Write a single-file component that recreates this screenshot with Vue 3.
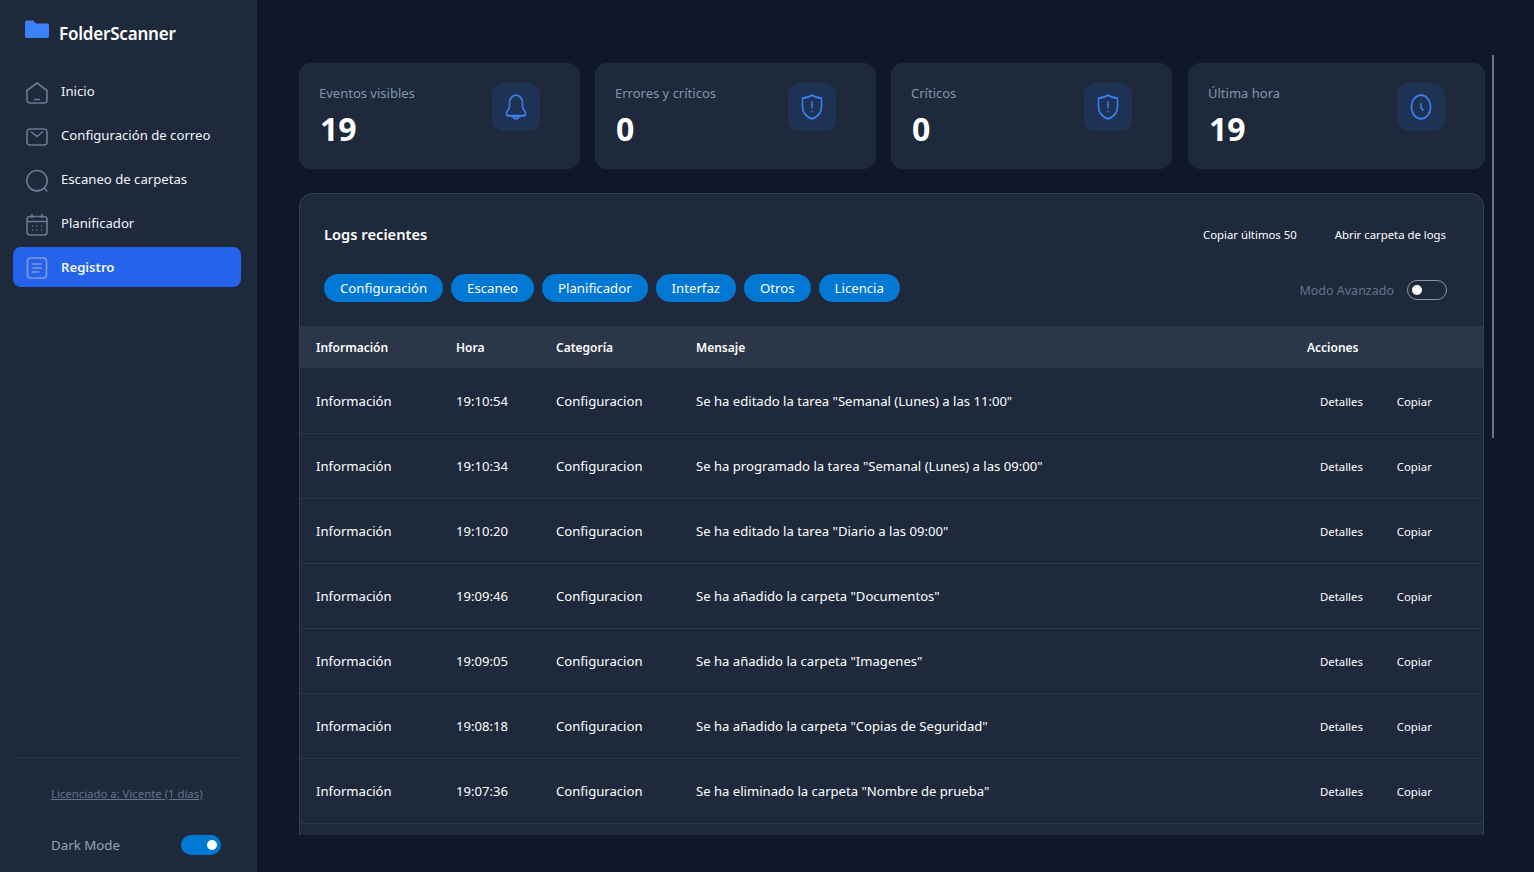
<template>
  <div class="app">
    <aside class="sidebar">
      <div class="brand">
        <svg class="brand-icon" viewBox="0 0 24 20" width="24" height="20">
          <path d="M0 2.500A2 2 0 0 1 2 .5h6.200l3 3H22a2 2 0 0 1 2 2V16a2 2 0 0 1-2 2H2a2 2 0 0 1-2-2z" fill="#3b82f6" />
        </svg>
        <span>FolderScanner</span>
      </div>

      <nav class="nav">
        <a v-for="item in navItems" :key="item.label" class="nav-item" :class="{ active: item.active }">
          <svg viewBox="0 0 24 24" width="24" height="24" fill="none" stroke="#6b7a90" stroke-width="1.6" stroke-linecap="round" stroke-linejoin="round">
            <path v-for="d in item.paths" :key="d" :d="d" />
          </svg>
          <span>{{ item.label }}</span>
        </a>
      </nav>

      <div class="side-foot">
        <a class="license">Licenciado a: Vicente (1 días)</a>
        <div class="dark-row">
          <span>Dark Mode</span>
          <span class="switch on"><i></i></span>
        </div>
      </div>
    </aside>

    <main class="main">
      <div class="scroller">
        <section class="stats">
          <div v-for="stat in stats" :key="stat.label" class="stat">
            <div>
              <div class="stat-label">{{ stat.label }}</div>
              <div class="stat-value">{{ stat.value }}</div>
            </div>
            <div class="stat-icon">
              <svg viewBox="0 0 24 24" width="24" height="30" preserveAspectRatio="none" fill="none" stroke="#3b82f6" stroke-width="1.500" stroke-linecap="round" stroke-linejoin="round">
                <path v-for="d in icons[stat.icon]" :key="d" :d="d" />
              </svg>
            </div>
          </div>
        </section>

        <section class="panel">
          <div class="panel-head">
            <h2>Logs recientes</h2>
            <div class="panel-actions">
              <button>Copiar últimos 50</button>
              <button>Abrir carpeta de logs</button>
            </div>
          </div>

          <div class="filters">
            <div class="chips">
              <button v-for="chip in chips" :key="chip" class="chip">{{ chip }}</button>
            </div>
            <div class="advanced">
              <span>Modo Avanzado</span>
              <span class="switch off"><i></i></span>
            </div>
          </div>

          <div class="row head">
            <div>Información</div>
            <div>Hora</div>
            <div>Categoría</div>
            <div>Mensaje</div>
            <div>Acciones</div>
          </div>
          <div v-for="log in logs" :key="log.time" class="row">
            <div>Información</div>
            <div>{{ log.time }}</div>
            <div>Configuracion</div>
            <div>{{ log.text }}</div>
            <div class="row-actions">
              <button>Detalles</button>
              <button>Copiar</button>
            </div>
          </div>
          <div class="row"></div>
        </section>
      </div>
      <div class="scrollbar"></div>
    </main>
  </div>
</template>

<script setup>
const navItems = [
  {
    label: 'Inicio',
    paths: ['M2 9.500 12 2l10 7.500V19a3 3 0 0 1-3 3H5a3 3 0 0 1-3-3z', 'M9.500 18.500h5'],
  },
  {
    label: 'Configuración de correo',
    paths: ['M5 4h14a3 3 0 0 1 3 3v10a3 3 0 0 1-3 3H5a3 3 0 0 1-3-3V7a3 3 0 0 1 3-3z', 'M6.500 7 12 11.500 17.500 7'],
  },
  {
    label: 'Escaneo de carpetas',
    paths: ['M12 1.500a10.200 10.200 0 1 0 0 20.400 10.200 10.200 0 0 0 0-20.400z', 'M19.500 19.500 22 22'],
  },
  {
    label: 'Planificador',
    paths: [
      'M5 3.500h14a3 3 0 0 1 3 3V19a3 3 0 0 1-3 3H5a3 3 0 0 1-3-3V6.500a3 3 0 0 1 3-3z',
      'M2 8.500h20',
      'M7 1.500v3M17 1.500v3',
      'M7.500 13h.01M12 13h.01M16.500 13h.01M7.500 17h.01M12 17h.01M16.500 17h.01',
    ],
  },
  {
    label: 'Registro',
    active: true,
    paths: [
      'M5.500 2h13a3 3 0 0 1 3 3v14a3 3 0 0 1-3 3h-13a3 3 0 0 1-3-3V5a3 3 0 0 1 3-3z',
      'M7.500 8h9M7.500 12h9M7.500 16h6',
    ],
  },
];

const icons = {
  bell: [
    'M12 2.500a6.500 6.500 0 0 0-6.500 6.500v3c0 1.800-3 3-3 5.200 0 1.100.9 1.800 2 1.800h15c1.100 0 2-.7 2-1.800 0-2.200-3-3.400-3-5.200V9A6.500 6.500 0 0 0 12 2.500z',
    'M8.500 19.500h7c-.8 1.300-2 2-3.500 2s-2.700-.7-3.500-2z',
  ],
  shield: [
    'M12 2.500c2.500 1.500 6 2.300 9.500 2.500v6.500c0 5-3.800 8.200-9.500 10-5.700-1.800-9.500-5-9.500-10V5c3.500-.2 7-1 9.500-2.500z',
    'M12 8v4.500M12 15.800h.01',
  ],
  clock: ['M12 2.500a9.500 9.500 0 1 0 0 19 9.500 9.500 0 0 0 0-19z', 'M12 9.500v3l2 2'],
};

const stats = [
  { label: 'Eventos visibles', value: 19, icon: 'bell' },
  { label: 'Errores y críticos', value: 0, icon: 'shield' },
  { label: 'Críticos', value: 0, icon: 'shield' },
  { label: 'Última hora', value: 19, icon: 'clock' },
];

const chips = ['Configuración', 'Escaneo', 'Planificador', 'Interfaz', 'Otros', 'Licencia'];

const logs = [
  { time: '19:10:54', text: 'Se ha editado la tarea "Semanal (Lunes) a las 11:00"' },
  { time: '19:10:34', text: 'Se ha programado la tarea "Semanal (Lunes) a las 09:00"' },
  { time: '19:10:20', text: 'Se ha editado la tarea "Diario a las 09:00"' },
  { time: '19:09:46', text: 'Se ha añadido la carpeta "Documentos"' },
  { time: '19:09:05', text: 'Se ha añadido la carpeta "Imagenes"' },
  { time: '19:08:18', text: 'Se ha añadido la carpeta "Copias de Seguridad"' },
  { time: '19:07:36', text: 'Se ha eliminado la carpeta "Nombre de prueba"' },
];
</script>

<style>
html,
body {
  margin: 0;
  background: #0f172a;
}
</style>

<style scoped>
.app {
  display: flex;
  width: 1534px;
  height: 872px;
  overflow: hidden;
  background: #0f172a;
  color: #fff;
  font-family: "Noto Sans", "Open Sans", sans-serif;
  font-size: 13.100px;
}

button {
  border: none;
  background: none;
  color: inherit;
  font: inherit;
  padding: 0;
}

.sidebar {
  display: flex;
  flex-direction: column;
  flex: 0 0 257px;
  box-sizing: border-box;
  padding: 20px 16px 17px 13px;
  background: #1e293b;
}

.brand {
  display: flex;
  align-items: center;
  gap: 10px;
  height: 26px;
  padding-left: 12px;
  font-size: 17px;
  font-weight: 600;
  letter-spacing: -0.2px;
}

.brand-icon {
  margin-top: -6px;
}

.nav {
  display: flex;
  flex-direction: column;
  gap: 4px;
  margin-top: 25px;
}

.nav-item {
  display: flex;
  align-items: center;
  gap: 12px;
  height: 40px;
  padding-left: 12px;
  border-radius: 8px;
  color: #f1f5f9;
  font-size: 13.150px;
}

.nav-item svg {
  margin-top: 3px;
}

.nav-item.active {
  background: #2563eb;
  font-weight: 600;
}

.nav-item.active svg {
  margin-top: 1px;
  stroke: #7f9bd8;
}

.side-foot {
  margin-top: auto;
  border-top: 1px solid #2b3648;
  margin-left: 1px;
  padding: 28px 20px 0 37px;
}

.license {
  display: block;
  color: #64748b;
  font-size: 11.350px;
  text-decoration: underline;
}

.dark-row {
  display: flex;
  align-items: center;
  justify-content: space-between;
  margin-top: 34px;
  color: #94a3b8;
  font-size: 13.300px;
}

.switch {
  display: flex;
  align-items: center;
  box-sizing: border-box;
  width: 40px;
  height: 20px;
  border-radius: 10px;
  padding: 0 4px;
}

.switch i {
  width: 10px;
  height: 10px;
  border-radius: 50%;
  background: #fff;
}

.switch.on {
  justify-content: flex-end;
  background: #0078d4;
}

.switch.off {
  border: 1px solid #8b95a3;
}

.main {
  position: relative;
  flex: 1;
  min-width: 0;
  box-sizing: border-box;
  padding: 63px 0 37px 42px;
}

.scroller {
  height: 100%;
  overflow: hidden;
}

.scrollbar {
  position: absolute;
  top: 55px;
  left: 1235px;
  width: 2px;
  height: 383px;
  background: #6b7280;
}

.stats {
  display: grid;
  grid-template-columns: 281px 281px 281px 298px;
  column-gap: 15px;
}

.stat {
  display: flex;
  justify-content: space-between;
  box-sizing: border-box;
  height: 106px;
  padding: 20px 40px 0 20px;
  border-radius: 12px;
  background: #1e293b;
}

.stat:last-child {
  margin-left: 1px;
}

.stat-label {
  color: #8196ae;
  font-size: 13px;
  line-height: 20px;
}

.stat-value {
  margin-top: 6px;
  padding-left: 1px;
  font-size: 32px;
  font-weight: 700;
  line-height: 40px;
}

.stat-icon {
  display: flex;
  align-items: center;
  justify-content: center;
  width: 48px;
  height: 48px;
  border-radius: 12px;
  background: #1e3354;
}

.panel {
  margin: 24px 0 0;
  width: 1185px;
  box-sizing: border-box;
  border: 1px solid #334155;
  border-bottom: none;
  border-radius: 14px 14px 0 0;
  background: #1e293b;
}

.panel-head {
  display: flex;
  align-items: center;
  justify-content: space-between;
  height: 80px;
  padding: 0 37px 0 24px;
}

.panel-head h2 {
  margin: 0;
  font-size: 14.700px;
  font-weight: 600;
}

.panel-actions {
  display: flex;
  gap: 38px;
  font-size: 11.350px;
}

.filters {
  display: flex;
  align-items: center;
  justify-content: space-between;
  height: 28px;
  padding: 0 36px 0 24px;
}

.chips {
  display: flex;
  gap: 8px;
}

.chip {
  height: 28px;
  padding: 0 16px;
  border-radius: 14px;
  background: #0078d4;
  color: #fff;
  font-size: 13.200px;
}

.advanced {
  display: flex;
  align-items: center;
  gap: 13px;
  padding-top: 4px;
  color: #64748b;
  font-size: 12.500px;
}

.row {
  display: grid;
  grid-template-columns: 140px 100px 140px 611px 1fr;
  align-items: center;
  box-sizing: border-box;
  height: 65px;
  padding-left: 16px;
  border-bottom: 1px solid #2b3648;
}

.row.head {
  height: 42px;
  margin-top: 24px;
  margin-bottom: 1px;
  border-bottom: none;
  background: #2b3648;
  font-weight: 600;
  font-size: 12px;
}

.row-actions {
  display: flex;
  gap: 34px;
  padding-left: 13px;
  font-size: 11.350px;
}
</style>
